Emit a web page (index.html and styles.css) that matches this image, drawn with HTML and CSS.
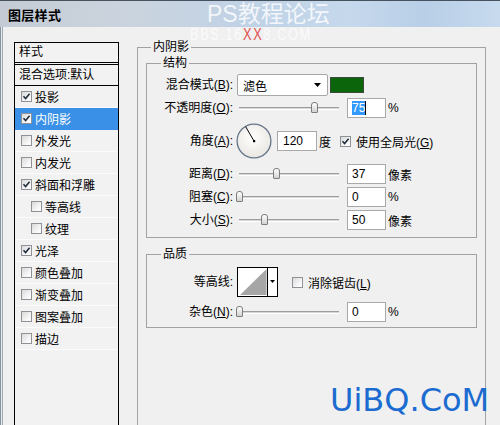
FILE: index.html
```html
<!DOCTYPE html>
<html lang="zh-CN">
<head>
<meta charset="utf-8">
<title>图层样式</title>
<link rel="stylesheet" href="styles.css">
</head>
<body>
<div class="window">
  <div class="titlebar">
    <span class="title">图层样式</span>
    <span class="wm-title">PS教程论坛</span>
  </div>
  <div class="wm-site">BBS.16<span class="red">XX</span>8.COM</div>

  <div class="content">
    <div class="list">
      <div class="lhead">样式</div>
      <div class="lblend">混合选项:默认</div>
      <div class="item"><span class="cb"><svg viewBox="0 0 9 9" width="9" height="9"><path d="M1.5 4.2 L3.6 6.6 L7.6 1.8" fill="none" stroke="#1e2a3a" stroke-width="1.5"/></svg></span>投影</div>
      <div class="item sel"><span class="cb"><svg viewBox="0 0 9 9" width="9" height="9"><path d="M1.5 4.2 L3.6 6.6 L7.6 1.8" fill="none" stroke="#1e2a3a" stroke-width="1.5"/></svg></span>内阴影</div>
      <div class="item"><span class="cb"></span>外发光</div>
      <div class="item"><span class="cb"></span>内发光</div>
      <div class="item"><span class="cb"><svg viewBox="0 0 9 9" width="9" height="9"><path d="M1.5 4.2 L3.6 6.6 L7.6 1.8" fill="none" stroke="#1e2a3a" stroke-width="1.5"/></svg></span>斜面和浮雕</div>
      <div class="item sub"><span class="cb"></span>等高线</div>
      <div class="item sub"><span class="cb"></span>纹理</div>
      <div class="item"><span class="cb"><svg viewBox="0 0 9 9" width="9" height="9"><path d="M1.5 4.2 L3.6 6.6 L7.6 1.8" fill="none" stroke="#1e2a3a" stroke-width="1.5"/></svg></span>光泽</div>
      <div class="item"><span class="cb"></span>颜色叠加</div>
      <div class="item"><span class="cb"></span>渐变叠加</div>
      <div class="item"><span class="cb"></span>图案叠加</div>
      <div class="item"><span class="cb"></span>描边</div>
    </div>

    <fieldset class="group outer">
      <legend>内阴影</legend>

      <fieldset class="group inner">
        <legend>结构</legend>
        <div class="rows">
          <div class="row">
            <span class="lbl">混合模式(<u>B</u>):</span>
            <div class="select"><span>滤色</span><svg class="arrow" width="7" height="4" viewBox="0 0 7 4"><path d="M0 0H7L3.5 4Z" fill="#000"/></svg></div>
            <span class="swatch"></span>
          </div>
          <div class="row">
            <span class="lbl">不透明度(<u>O</u>):</span>
            <div class="slider"><span class="thumb" style="left:75px"></span></div>
            <span class="field"><span class="hl">75</span><span class="caret"></span></span>
            <span class="unit">%</span>
          </div>
          <div class="row tall">
            <span class="lbl">角度(<u>A</u>):</span>
            <svg class="dial" width="36" height="36" viewBox="0 0 36 36">
              <defs>
                <radialGradient id="dg" cx="45%" cy="40%" r="65%">
                  <stop offset="0" stop-color="#ffffff"/>
                  <stop offset="1" stop-color="#e8e5df"/>
                </radialGradient>
              </defs>
              <circle cx="18" cy="18" r="16.9" fill="url(#dg)" stroke="#66758a" stroke-width="1.3"/>
              <line x1="18" y1="18" x2="9.6" y2="3.6" stroke="#000" stroke-width="1"/>
              <rect x="17" y="17" width="2.2" height="2.2" fill="#000"/>
            </svg>
            <span class="field wide">120</span>
            <span class="unit">度</span>
            <span class="cb gap"><svg viewBox="0 0 9 9" width="9" height="9"><path d="M1.5 4.2 L3.6 6.6 L7.6 1.8" fill="none" stroke="#1e2a3a" stroke-width="1.5"/></svg></span>
            <span class="cbtext">使用全局光(<u>G</u>)</span>
          </div>
          <div class="row">
            <span class="lbl">距离(<u>D</u>):</span>
            <div class="slider"><span class="thumb" style="left:37px"></span></div>
            <span class="field">37</span>
            <span class="unit">像素</span>
          </div>
          <div class="row">
            <span class="lbl">阻塞(<u>C</u>):</span>
            <div class="slider"><span class="thumb" style="left:0px"></span></div>
            <span class="field">0</span>
            <span class="unit">%</span>
          </div>
          <div class="row">
            <span class="lbl">大小(<u>S</u>):</span>
            <div class="slider"><span class="thumb" style="left:25px"></span></div>
            <span class="field">50</span>
            <span class="unit">像素</span>
          </div>
        </div>
      </fieldset>

      <fieldset class="group inner quality">
        <legend>品质</legend>
        <div class="rows qrows">
          <div class="row contour">
            <span class="lbl">等高线:</span>
            <svg class="contour-pick" width="41" height="30" viewBox="0 0 41 30">
              <rect x="0.5" y="0.5" width="40" height="29" fill="#fff" stroke="#000"/>
              <path d="M3 28 L29.5 2 L29.5 28 Z" fill="#a6a6a6"/>
              <line x1="30.5" y1="0" x2="30.5" y2="30" stroke="#000"/>
              <path d="M33 13 H38 L35.5 16 Z" fill="#000"/>
            </svg>
            <span class="cb gap2"></span>
            <span class="cbtext">消除锯齿(<u>L</u>)</span>
          </div>
          <div class="row">
            <span class="lbl">杂色(<u>N</u>):</span>
            <div class="slider"><span class="thumb" style="left:0px"></span></div>
            <span class="field">0</span>
            <span class="unit">%</span>
          </div>
        </div>
      </fieldset>
    </fieldset>
  </div>

  <div class="wm-brand">UiBQ.CoM</div>
</div>
</body>
</html>
```

FILE: styles.css
```css
html, body {
  margin: 0;
  padding: 0;
  background: #f0f0f0;
}

.window {
  position: relative;
  width: 500px;
  height: 425px;
  overflow: hidden;
  background: #f0f0f0;
  font-family: "Liberation Sans", "Noto Sans CJK SC", sans-serif;
  font-size: 12px;
  color: #000;
  box-shadow: inset 1px 0 0 #8a949f, inset 2px 0 0 #e4e9ee, inset 3px 0 0 #a3acb6;
}

/* ---------- title bar ---------- */
.titlebar {
  position: relative;
  height: 27px;
  box-sizing: border-box;
  border-top: 1px solid #46525e;
  background: linear-gradient(to right, #c4cbd4 0%, #cbd4de 25%, #c0d2e6 50%, #c6d8ec 70%, #b8cfe7 85%, #c7daee 100%);
  display: flex;
  align-items: center;
  padding-left: 8px;
}

.title {
  font-size: 13px;
  font-weight: bold;
  letter-spacing: 0.3px;
}

.wm-title {
  position: absolute;
  left: 207px;
  top: 2px;
  font-size: 23px;
  line-height: 23px;
  color: rgba(255, 255, 255, 0.82);
}

.wm-site {
  position: absolute;
  left: 190px;
  top: 28px;
  font-size: 16px;
  line-height: 14px;
  letter-spacing: 2px;
  color: rgba(255, 255, 255, 0.75);
  transform: scaleX(0.8);
  transform-origin: left top;
}

.wm-site .red {
  color: #e05252;
}

.wm-brand {
  position: absolute;
  left: 330px;
  top: 384px;
  font-family: "DejaVu Sans", sans-serif;
  font-size: 32px;
  line-height: 32px;
  color: #1b6bd0;
}

/* ---------- main area ---------- */
.content {
  display: flex;
  gap: 18px;
  height: 398px;
  box-sizing: border-box;
  padding: 13px 0 0 14px;
}

/* ---------- style list ---------- */
.list {
  width: 105px;
  box-sizing: border-box;
  margin-top: 2px;
  border: 1px solid #000;
  border-bottom: 0;
  background: #f2f2f2;
  flex: none;
}

.lhead {
  height: 19px;
  line-height: 19px;
  padding-left: 4px;
  border-bottom: 3px double #000;
}

.lblend {
  height: 20px;
  line-height: 20px;
  padding-left: 4px;
  border-bottom: 1px solid #000;
  white-space: nowrap;
}

.item {
  height: 22px;
  box-sizing: border-box;
  display: flex;
  align-items: center;
  padding-left: 6px;
  border-bottom: 1px solid #fbfbfb;
  white-space: nowrap;
}

.item.sub {
  padding-left: 16px;
}

.item.sel {
  background: #3990e6;
  color: #fff;
  border-bottom-color: #3990e6;
}

.cb {
  flex: none;
  width: 11px;
  height: 11px;
  box-sizing: border-box;
  border: 1px solid #8e9296;
  background: linear-gradient(135deg, #d9d9d9 0%, #f4f4f4 60%, #ffffff 100%);
  display: inline-flex;
  align-items: center;
  justify-content: center;
  margin-right: 3px;
}

.cb svg {
  display: block;
}

/* ---------- group boxes ---------- */
.group {
  margin: 0;
  min-width: 0;
  border: 1px solid #a2a2a2;
}

.group legend {
  font-size: 12px;
  line-height: 14px;
  padding: 0 2px;
}

.outer {
  flex: none;
  width: 349px;
  box-sizing: border-box;
  padding: 2px 8px 0;
  margin-bottom: -20px;
}

.outer > legend {
  margin-left: 5px;
}

.inner {
  padding: 4px 4px 6px;
}

.inner > legend {
  margin-left: 10px;
}

.quality {
  margin-top: 9px;
  padding: 6px 4px 4px;
}

.rows {
  display: flex;
  flex-direction: column;
  gap: 1px;
}

.qrows {
  gap: 4px;
}

.row {
  height: 22px;
  display: flex;
  align-items: center;
  white-space: nowrap;
}

.row.tall {
  height: 42px;
}

.row.contour {
  height: 30px;
}

.lbl {
  flex: none;
  width: 82px;
  margin-right: 3px;
  text-align: right;
  line-height: 14px;
}

/* select */
.select {
  flex: none;
  width: 91px;
  height: 22px;
  margin-left: 1px;
  box-sizing: border-box;
  border: 1px solid #a7a7a7;
  border-radius: 2px;
  background: #fff;
  display: flex;
  align-items: center;
  justify-content: space-between;
  padding: 0 6px 0 5px;
}

.arrow {
  display: block;
}

.swatch {
  flex: none;
  width: 34px;
  height: 16px;
  margin-left: 2px;
  box-sizing: border-box;
  border: 1px solid #3c4a3c;
  background: #0b650b;
}

/* sliders */
.slider {
  flex: none;
  position: relative;
  width: 104px;
  height: 14px;
}

.slider::before {
  content: "";
  position: absolute;
  left: 3px;
  right: 1px;
  top: 6px;
  height: 1px;
  border-top: 1px solid #9d9d9d;
  border-bottom: 1px solid #ffffff;
  background: #d6d6d6;
}

.thumb {
  position: absolute;
  top: 1px;
  width: 7px;
  height: 11px;
  box-sizing: border-box;
  border: 1px solid #7d7d7d;
  border-radius: 3px 3px 1px 1px;
  background: linear-gradient(#ffffff, #d2d2d2);
}

/* fields */
.field {
  flex: none;
  width: 39px;
  height: 20px;
  margin-left: 7px;
  box-sizing: border-box;
  border: 1px solid #a9a9a9;
  background: #fff;
  padding-left: 4px;
  display: flex;
  align-items: center;
  line-height: 14px;
}

.field.wide {
  width: 40px;
  margin-left: 5px;
  padding-left: 5px;
}

.hl {
  background: #3399ff;
  color: #fff;
}

.caret {
  width: 1px;
  height: 14px;
  background: #000;
}

.unit {
  margin-left: 2px;
}

.dial {
  flex: none;
  display: block;
}

.cb.gap {
  margin-left: 9px;
  margin-right: 5px;
}

.cb.gap2 {
  margin-left: 14px;
  margin-right: 5px;
}

.contour-pick {
  flex: none;
  display: block;
  margin-left: 1px;
}
```
